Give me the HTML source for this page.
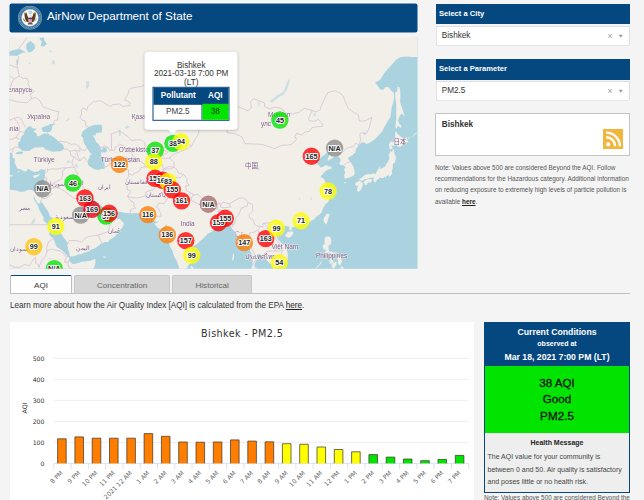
<!DOCTYPE html>
<html lang="en"><head><meta charset="utf-8"><title>AirNow Department of State</title>
<style>
*{box-sizing:border-box}
html,body{margin:0;padding:0}
body{width:644px;height:500px;overflow:hidden;background:#f4f4f4;font-family:"Liberation Sans",sans-serif;color:#333;position:relative}
.abs{position:absolute}
.hdr{left:10px;top:4px;width:408.3px;height:28.9px;transform:translate(-.5px,-.6px);border-radius:2px;box-shadow:0 0 0 .6px #fbfbfb;background:#05477f;color:#fff}
.hdr .t{position:absolute;left:37.4px;top:4.7px;font-size:11.69px;white-space:nowrap;line-height:15px}
.seal{position:absolute;left:8px;top:2px;transform:translate(.5px,.4px)}
.map{left:10px;top:38px;width:408.2px;height:231.4px;transform:translate(-.5px,-.2px);overflow:hidden;background:#f2efe9}
.mapsvg{position:absolute;left:0;top:0}
.ml{font:bold 7.2px "Liberation Sans",sans-serif;fill:#222;text-anchor:middle;stroke:#fff;stroke-width:2px;paint-order:stroke;stroke-linejoin:round}
.cl{font:6.5px "Liberation Sans","Noto Sans CJK SC",sans-serif;fill:#6d4a7e;stroke:#f6f3ee;stroke-width:.9px;paint-order:stroke;opacity:.88}
.pop{left:135.2px;top:13.6px;width:93px;height:78px;background:#fff;border-radius:3.5px;box-shadow:0 1px 3px rgba(0,0,0,.18);text-align:center;font-size:8.18px;line-height:8.8px;color:#333}
.pop:after{content:"";position:absolute;left:22.7px;top:77.5px;border:5.5px solid transparent;border-top:6.5px solid #fff;border-bottom:0}
.pop .tx{position:absolute;left:0;right:0;top:10.1px}
.ptab{position:absolute;left:8.3px;top:35.4px;width:76.2px;height:33.8px;border:0.8px solid #05477f;background:#fff}
.ptab div{position:absolute;text-align:center;font-size:8.18px}
.sel-h{left:435.6px;width:194.4px;height:20.2px;background:#05477f;color:#fff;font-size:7.6px;font-weight:bold;line-height:20px;padding-left:3.4px}
.sel-d{left:435.6px;width:194.4px;height:20.2px;background:#fff;box-shadow:inset 0 0 0 .65px #c2c2c2;border-radius:2px;font-size:8.18px;line-height:20.2px;padding-left:6.4px;color:#333;transform:translate(-.2px,-.2px)}
.sel-d .x{position:absolute;right:17.3px;top:.4px;font-size:8.5px;color:#999}
.sel-d .a{position:absolute;right:7px;top:9.1px;border:2.7px solid transparent;border-top:3px solid #999;border-bottom:0}
.cbox{left:435px;top:113.3px;width:195px;height:43px;background:#fff;border:1px solid #c4c4c4}
.cbox b{position:absolute;left:5.8px;top:6px;font-size:8.18px;line-height:9px;color:#333}
.rss{position:absolute;left:167.1px;top:14.5px}
.note{left:435px;top:161.8px;width:205px;font-size:6.4px;line-height:11.3px;color:#555;white-space:nowrap}
.note b{color:#222;text-decoration:underline}
.tab{top:275.4px;height:17.8px;font-size:8.1px;line-height:20.4px;text-align:center;border-radius:2px 2px 0 0}
.tab.on{left:9.9px;width:62.2px;background:#fff;border:1px solid #bdbdbd;border-top:1.6px solid #05477f;border-bottom:0;color:#333}
.tab.off{background:#d6d6d6;color:#666;border:1px solid #c8c8c8;border-bottom:0}
.tline{left:10px;top:293px;width:620px;height:1px;background:#bfbfbf}
.learn{left:10px;top:301px;font-size:8.13px;line-height:10px;white-space:nowrap;color:#333}
.learn u{color:#222}
.cpanel{left:10px;top:322px;width:464px;height:178px;background:#fff}
.chart{position:absolute;left:0;top:0}
.yl{font:6.2px "DejaVu Sans",sans-serif;fill:#333;text-anchor:end}
.xl{font:6.2px "DejaVu Sans",sans-serif;fill:#666;text-anchor:end}
.ct{font:9.6px "DejaVu Sans",sans-serif;fill:#333;text-anchor:middle;letter-spacing:.42px}
.ya{font:6.3px "DejaVu Sans",sans-serif;fill:#333;text-anchor:middle}
.cc{left:484px;top:322px;width:146px;height:171px;border:1px solid #05477f;background:#eee}
.cc .h{position:absolute;left:0;right:0;top:0;height:43.2px;background:#05477f;color:#fff;text-align:center;font-weight:bold}
.cc .g{position:absolute;left:0;right:0;top:43.2px;height:66.8px;background:#00e400;text-align:center;color:#111;font-size:11.69px;-webkit-text-stroke:.3px #111}
.cc .m{position:absolute;left:0;right:0;top:110px;bottom:0;background:#eee;font-size:7.01px;color:#444}
.note2{left:484px;top:494.2px;font-size:6.4px;line-height:8px;color:#555;white-space:nowrap}
</style></head><body>
<div class="abs hdr"><svg class="seal" width="24" height="24" viewBox="0 0 24 24"><circle cx="12" cy="12" r="11.750" fill="#2f6fbe" stroke="#cfc84e" stroke-width=".550"/><circle cx="12" cy="12" r="10.150" fill="none" stroke="#6d9fdc" stroke-width="1.300" stroke-dasharray="1 .700"/><circle cx="12" cy="12" r="8.450" fill="#fdfdfb" stroke="#d9d25c" stroke-width=".600" stroke-dasharray=".800 .400"/><circle cx="12.250" cy="6.400" r="2" fill="#b3d5ea"/><path d="M6.300 6.900L8.600 6.900C9 9 9.800 10.900 10.500 12.100L10.700 16.300 8.900 16.300C8 15 7.100 13.400 6.800 11.600Z" fill="#5e3d1e"/><path d="M17.900 6.900L15.600 6.900C15.200 9 14.400 10.900 13.700 12.100L13.500 16.300 15.300 16.300C16.200 15 17.100 13.400 17.400 11.600Z" fill="#5e3d1e"/><path d="M6.200 6.600l2.400.1-.2.900-2-.2Z" fill="#e2d24a"/><path d="M18 6.600l-2.400.1.200.900 2-.2Z" fill="#e2d24a"/><path d="M10.400 16.500h3.700l.600 2.300h-4.900Z" fill="#5a5650"/><ellipse cx="12.300" cy="10.400" rx="1.150" ry="1.400" fill="#f3f1ea" stroke="#bdb7a2" stroke-width=".300"/><path d="M12.700 10.900l.9.300-.9.300Z" fill="#e2c93e"/><path d="M10.400 12h3.700v2.800c0 .9-.9 1.500-1.850 1.800-.950-.3-1.850-.9-1.850-1.800Z" fill="#ee7783"/><path d="M10.400 12h3.700v1.500h-3.700Z" fill="#25478a"/><path d="M11.500 13.500v2.800M12.900 13.500v2.800" stroke="#fbe6e8" stroke-width=".450"/><path d="M5.100 12.800c.2 1.400.9 2.600 2 3.400l.7-.7c-.9-.7-1.500-1.700-1.700-2.900Z" fill="#3c8c3c"/><path d="M19.100 12.600l-2 3.200M18.500 12.300l-2 3.200" stroke="#8d8d8d" stroke-width=".400"/><path d="M9.400 16.500l1.200.2M14.900 16.500l-1.200.2" stroke="#dcc840" stroke-width=".800"/></svg><div class="t">AirNow Department of State</div></div>
<div class="abs map"><svg class="mapsvg" width="408.1" height="231.2" viewBox="0 0 408.1 231.2">
<rect width="409" height="232" fill="#aad3df"/>
<g filter="url(#soft)">
<path fill="#f2efe9" d="M429.6 -28.5L429.6 17.3L419.7 21.1L415.7 17.9L409.8 17.3L407.8 19.2L403.1 19.2L398.2 18.6L391.6 19.2L387.3 21.1L382.0 27.3L377.3 32.2L374.0 36.4L371.0 41.6L365.4 45.0L367.7 47.3L370.0 50.6L372.0 52.3L374.3 51.7L375.3 49.5L379.3 49.5L381.3 52.8L384.3 55.0L384.6 60.4L383.9 64.1L382.3 69.3L381.6 74.3L381.0 79.3L377.7 84.2L375.0 88.9L372.7 93.6L368.4 98.2L365.1 101.8L360.1 105.0L356.8 106.3L354.2 104.1L351.8 105.0L349.5 107.2L348.5 108.5L346.2 111.6L345.9 114.6L341.9 118.0L338.9 119.7L338.6 121.4L341.2 124.3L343.6 128.5L344.9 132.5L345.2 135.4L344.2 137.8L341.9 138.9L338.6 140.1L335.3 140.9L334.6 138.5L335.6 134.5L334.6 131.3L336.3 129.7L334.3 127.6L331.3 127.2L329.7 126.0L331.0 123.5L330.7 120.1L328.3 118.4L324.4 119.3L321.1 121.4L318.4 123.1L318.1 120.6L320.4 116.3L321.1 115.0L317.7 114.2L315.4 116.7L312.1 118.9L309.8 121.4L306.5 121.8L305.8 123.9L308.1 126.4L310.1 128.0L311.1 129.7L313.4 129.3L316.4 127.2L319.1 128.5L322.0 128.9L322.0 130.9L318.7 131.7L316.1 133.3L314.4 134.9L312.1 137.4L311.1 139.3L314.4 141.3L316.4 145.2L317.1 148.3L319.7 150.6L320.1 154.1L318.4 155.6L316.4 156.7L318.7 157.9L320.4 158.6L319.7 161.6L318.7 164.2L316.4 166.0L314.4 169.0L313.1 171.5L312.1 174.4L309.8 176.9L307.5 178.4L304.8 181.2L302.5 182.6L298.9 184.4L294.9 185.5L292.6 184.8L292.3 186.5L288.9 187.9L285.6 188.6L282.3 189.7L282.0 192.4L280.0 192.1L280.0 189.0L277.4 188.3L274.7 188.3L272.4 189.3L270.1 191.1L269.1 193.1L267.1 195.6L266.4 198.0L268.4 201.4L270.7 204.1L273.4 206.2L275.0 207.5L276.7 209.9L278.0 214.3L278.4 218.3L278.0 221.6L276.7 223.3L274.1 224.9L271.4 226.3L270.1 226.6L269.8 228.9L268.1 229.6L265.8 230.9L264.1 232.2L263.5 231.5L263.5 228.2L264.5 226.9L262.5 226.3L259.8 225.6L259.2 224.3L257.5 222.9L256.8 221.6L254.9 220.3L252.5 219.0L250.6 218.6L250.6 216.3L248.9 215.9L247.6 216.6L247.4 219.3L247.2 221.6L245.9 224.3L244.9 226.3L244.9 228.9L245.9 230.2L247.2 230.2L247.6 232.5L248.6 240.7L241.9 240.7L241.9 234.2L241.9 230.9L242.6 228.2L242.9 225.9L243.3 222.6L242.9 220.0L242.3 216.6L241.3 214.3L240.3 210.9L239.6 207.5L238.3 204.8L237.0 204.5L234.3 206.5L232.0 208.2L229.7 207.9L228.7 206.5L229.4 203.1L228.7 199.7L227.1 196.3L225.4 193.8L223.7 192.1L222.1 190.4L221.1 188.6L220.4 185.8L218.8 184.8L216.8 185.8L215.5 187.2L212.8 187.9L210.5 188.3L208.2 187.6L207.2 187.9L205.2 189.3L204.2 191.4L203.2 193.1L201.9 194.2L199.6 195.2L197.9 196.3L195.6 198.7L193.0 201.4L189.3 204.1L189.0 205.5L186.7 206.5L185.3 207.9L183.0 208.2L181.7 210.2L181.7 213.3L182.4 216.6L182.0 219.6L181.0 222.3L180.9 226.3L179.1 226.6L178.1 228.9L177.7 230.2L175.7 231.2L175.1 232.9L173.4 233.8L171.4 232.9L169.8 230.9L169.1 228.2L168.1 225.6L167.1 222.6L165.5 220.3L164.2 217.6L163.5 214.3L162.2 211.6L160.9 209.2L159.5 205.8L158.9 202.4L157.9 199.0L157.5 196.6L157.2 193.8L157.5 191.1L156.9 189.7L156.9 186.2L155.9 187.2L155.2 189.7L152.9 190.7L150.9 191.4L148.3 190.0L145.6 187.2L145.0 185.5L147.3 185.1L149.3 183.7L147.3 184.0L145.0 183.3L143.3 181.6L142.3 180.5L140.0 179.8L139.0 177.6L138.0 176.9L137.0 175.1L133.4 174.8L130.1 175.5L126.8 175.1L123.4 175.5L120.5 175.5L116.8 175.1L113.5 174.8L111.2 174.1L107.9 173.7L105.9 171.9L105.2 169.0L102.9 168.2L100.3 170.1L97.0 170.4L93.7 169.7L90.7 167.1L87.0 165.7L85.4 162.7L84.7 161.2L82.7 157.9L80.4 157.5L78.4 156.3L77.1 157.9L75.5 158.2L75.5 160.1L76.8 163.1L78.1 166.0L80.8 168.2L82.4 170.1L82.7 173.0L84.1 175.1L84.7 176.9L85.4 174.1L86.0 172.2L87.4 173.3L87.4 176.2L86.7 177.6L88.0 179.4L90.7 179.1L94.0 179.4L96.6 178.4L99.6 175.1L101.9 172.6L103.1 171.3L103.3 174.4L103.3 176.9L104.9 179.4L107.9 180.9L110.5 181.2L112.5 183.7L114.5 185.1L113.5 188.6L111.2 191.8L108.6 192.8L107.9 196.3L106.2 197.6L103.9 200.0L100.3 201.7L98.6 204.1L95.6 204.1L92.7 205.2L89.4 207.5L86.0 210.2L82.1 211.6L78.8 213.6L75.5 214.6L72.1 216.3L67.8 216.9L65.5 218.3L62.9 218.6L60.6 218.6L59.9 216.6L59.6 214.3L58.6 211.2L57.9 208.5L58.2 205.8L56.6 202.8L54.3 200.0L52.3 196.6L50.0 193.1L47.3 190.4L46.0 187.9L45.3 184.0L43.3 180.5L40.4 178.4L39.4 175.1L37.4 171.9L34.7 167.9L33.1 165.3L31.8 164.9L32.4 159.7L31.4 162.3L30.4 165.3L29.9 166.2L27.8 164.6L26.1 162.0L24.5 158.2L23.8 159.7L24.8 162.3L26.5 164.6L27.8 166.8L28.8 169.0L30.1 172.6L32.1 176.2L34.1 179.8L34.1 183.0L36.7 185.1L38.7 186.9L39.7 190.4L39.7 193.8L40.0 197.3L42.0 199.4L44.0 200.7L45.7 205.8L47.3 209.2L50.6 211.2L53.3 213.3L56.6 216.9L59.2 219.0L59.9 221.0L59.2 222.3L60.9 224.3L63.2 226.3L65.5 226.3L68.8 225.3L72.1 223.9L75.5 223.6L78.8 223.3L82.1 222.6L84.7 221.3L86.0 221.6L85.7 225.9L84.7 229.2L83.7 230.9L82.1 240.7L-17.2 240.7L-17.2 147.2L-10.6 146.8L-7.0 147.9L-4.0 150.3L-0.7 151.8L2.6 152.2L6.9 152.7L10.9 154.1L15.2 153.7L17.5 152.4L19.8 152.0L22.5 152.4L23.8 153.3L26.5 153.7L29.1 152.9L30.8 151.8L32.1 148.3L32.8 146.4L34.1 142.9L35.4 140.1L35.4 136.2L35.7 134.5L36.4 131.7L34.4 132.1L31.8 131.3L29.1 133.3L25.8 134.1L23.5 133.7L19.2 131.3L17.9 131.3L17.5 133.3L14.6 133.7L11.9 131.7L9.3 131.3L7.6 130.5L6.6 128.0L5.3 125.2L5.3 123.1L5.3 120.6L3.3 120.1L3.3 118.0L3.0 116.7L2.6 115.5L-0.7 114.2L-4.0 114.6L-17.2 115.9L-17.2 -28.5Z"/>
<path fill="#f2efe9" d="M379.3 106.7L381.0 103.6L384.3 104.1L385.6 100.5L385.6 95.0L386.3 93.6L388.2 95.9L391.6 99.1L394.9 100.7L397.5 99.1L397.2 102.3L399.2 103.4L396.5 105.0L394.2 105.2L390.9 109.4L388.2 108.1L385.9 106.7L383.3 108.1L381.6 107.2L383.0 110.3L383.9 110.3L380.3 112.0L380.0 109.4Z"/>
<path fill="#f2efe9" d="M383.3 111.6L384.6 112.0L384.9 115.9L386.6 119.7L385.3 125.2L383.3 125.6L383.3 130.5L382.3 133.3L382.8 135.8L381.3 137.8L379.6 138.9L379.3 136.2L378.6 137.8L377.0 138.1L376.0 140.1L375.0 138.5L374.0 140.1L371.0 140.1L369.7 139.3L369.7 141.3L367.7 141.7L366.1 144.6L363.8 142.9L364.1 141.3L364.7 139.9L362.8 139.7L360.1 140.1L357.5 141.3L354.8 141.3L353.8 142.9L351.2 142.5L349.9 142.7L349.9 141.1L352.2 139.9L355.1 137.4L357.5 136.4L360.8 136.4L364.1 135.6L366.4 136.2L367.1 133.7L369.1 130.9L369.4 128.9L371.0 128.5L370.0 130.1L370.4 131.3L372.7 130.5L375.3 128.9L376.7 126.4L378.6 123.9L379.6 121.0L380.0 118.4L379.0 118.2L380.0 115.9L381.0 113.3L382.6 114.2Z"/>
<path fill="#f2efe9" d="M353.5 145.0L355.8 142.5L356.8 142.3L359.1 141.3L361.1 141.1L362.4 141.7L362.4 143.3L360.8 145.2L358.8 144.5L356.8 147.4L355.1 146.8L354.8 144.8Z"/>
<path fill="#f2efe9" d="M349.9 142.9L352.5 144.1L353.2 145.6L353.2 147.6L351.8 151.0L350.5 152.9L349.2 154.1L347.5 152.9L347.9 150.3L348.9 147.9L347.5 147.9L346.2 147.9L345.6 145.6L346.9 144.5L348.2 144.1Z"/>
<path fill="#f2efe9" d="M386.6 91.3L385.9 88.0L386.6 84.2L386.9 79.3L386.6 75.3L386.9 69.3L386.6 64.1L385.6 59.9L385.9 54.5L387.6 53.4L388.2 49.0L389.9 49.5L390.9 54.5L390.9 58.8L390.6 64.1L392.6 70.3L394.2 75.8L395.5 78.3L391.6 75.8L389.2 80.3L388.6 82.7L390.2 86.6L391.6 87.5L391.6 90.3L389.2 88.5L388.2 88.5Z"/>
<path fill="#f2efe9" d="M317.1 176.0L320.1 176.2L319.1 179.8L318.1 183.3L316.8 186.9L314.8 184.8L314.1 182.3L314.4 180.1L316.1 177.6Z"/>
<path fill="#f2efe9" d="M276.4 196.6L278.0 194.2L280.7 193.7L283.7 193.8L284.0 195.2L282.3 198.0L280.7 199.4L279.0 200.0L276.4 199.0L276.0 197.3Z"/>
<path fill="#f2efe9" d="M315.8 199.0L317.1 198.7L320.4 199.0L321.4 200.7L322.0 203.8L321.1 206.5L319.1 207.9L319.1 210.9L319.7 213.6L322.0 213.6L323.7 214.6L326.7 214.9L327.3 217.6L327.0 219.0L324.7 217.6L322.7 216.6L321.7 215.6L319.4 214.6L317.1 215.1L315.8 214.9L315.8 212.9L317.1 212.6L315.8 211.6L314.1 211.6L313.4 208.9L313.4 206.5L314.8 207.2L315.1 204.8L315.1 202.4Z"/>
<path fill="#f2efe9" d="M315.1 216.3L317.1 215.9L318.7 217.3L318.7 219.6L317.4 220.3L316.4 218.6Z"/>
<path fill="#f2efe9" d="M320.4 221.3L323.4 222.3L324.0 223.9L322.4 225.6L320.4 225.9L320.1 223.6Z"/>
<path fill="#f2efe9" d="M328.0 219.1L331.3 219.3L332.6 223.6L331.0 226.9L330.3 227.6L329.3 226.9L328.3 224.6L328.7 222.6L328.0 221.0Z"/>
<path fill="#f2efe9" d="M323.7 224.6L325.4 224.6L327.0 223.6L327.0 226.6L325.0 229.6L324.0 230.6L322.0 228.9L322.4 226.6Z"/>
<path fill="#f2efe9" d="M312.1 223.3L311.5 225.9L308.8 228.6L305.5 231.9L304.5 232.9L306.5 229.9L309.8 226.6L311.5 223.6Z"/>
<path fill="#f2efe9" d="M331.6 228.2L334.3 230.2L334.6 234.2L333.6 240.7L320.4 240.7L320.7 237.5L322.0 234.8L324.7 232.2L326.4 233.8L328.0 232.5L329.7 231.2L331.0 230.9Z"/>
<path fill="#f2efe9" d="M23.5 138.5L25.5 137.2L27.8 137.2L30.9 135.8L29.1 138.3L28.1 138.7L25.8 140.1L23.8 139.5Z"/>
<path fill="#f2efe9" d="M-5.6 136.6L-3.3 136.4L-0.7 137.0L2.0 137.4L3.6 137.6L3.3 138.5L-0.7 138.7L-4.0 137.9L-5.6 137.6Z"/>
<path fill="#f2efe9" d="M8.3 133.9L9.9 132.7L9.6 134.5L8.4 134.9Z"/>
<path fill="#f2efe9" d="M181.0 228.2L182.4 228.2L184.4 230.9L185.7 232.5L187.7 235.8L187.0 239.4L181.4 240.7L180.7 235.8L181.0 232.5L181.7 229.9Z"/>
<path fill="#f2efe9" d="M93.0 219.0L94.7 218.8L97.0 219.1L95.6 220.0L93.7 219.8Z"/>
<path fill="#f2efe9" d="M334.3 145.2L335.6 144.3L336.8 144.6L335.6 145.6Z"/>
<path fill="#f2efe9" d="M223.4 215.9L224.4 216.3L224.4 221.0L223.4 222.6L222.7 222.3L223.1 219.3Z"/>
<path fill="#f2efe9" d="M402.8 98.7L406.1 95.5L409.1 93.6L408.4 94.5L405.1 97.3L403.1 98.9Z"/>
<path fill="#f2efe9" d="M397.8 101.8L399.8 99.1L400.8 98.7L399.5 100.7L398.2 101.8Z"/>
<path fill="#aad3df" d="M12.6 112.9L9.3 109.8L8.3 107.2L9.3 104.1L11.2 102.7L11.6 99.1L14.6 95.9L14.9 93.6L16.5 91.3L18.5 88.9L20.8 88.5L22.5 88.9L21.8 90.3L24.1 90.8L27.5 90.8L25.1 92.7L24.1 94.3L27.1 95.2L27.1 97.8L28.5 98.7L30.4 98.0L32.8 96.8L34.1 95.7L37.4 95.9L38.1 95.0L38.7 95.5L40.0 97.3L42.4 98.2L45.7 100.5L48.0 102.7L50.0 104.5L52.3 105.9L53.9 107.6L54.6 110.7L53.3 112.4L50.0 113.7L47.3 113.5L44.0 114.0L40.7 113.3L38.4 112.2L36.7 112.4L35.4 110.7L33.1 109.2L29.1 109.6L25.8 109.8L22.5 111.1L20.2 112.9L16.9 113.1L13.6 112.9Z"/>
<path fill="#aad3df" d="M38.1 94.5L35.1 94.1L33.4 94.1L32.1 90.8L33.4 89.4L36.7 88.0L38.4 87.7L40.7 86.3L43.3 86.1L46.3 85.6L45.0 87.0L43.0 88.0L42.4 90.3L42.7 91.3L41.7 92.7L40.7 94.1L38.7 94.3Z"/>
<path fill="#aad3df" d="M5.9 115.9L7.6 116.5L11.9 116.3L14.2 115.0L12.6 113.7L9.3 113.7L7.3 114.4Z"/>
<path fill="#aad3df" d="M72.1 96.8L73.1 93.6L75.5 91.7L78.8 89.4L82.1 88.0L85.4 87.0L88.7 87.0L92.0 87.0L92.7 90.3L92.3 94.5L88.7 95.0L86.0 95.5L86.4 97.8L83.1 97.8L84.7 99.6L86.0 102.1L86.4 104.1L88.7 105.9L90.3 107.6L91.0 110.3L91.7 112.4L93.7 109.4L97.0 109.8L97.6 112.9L95.3 115.0L93.0 114.6L91.7 114.0L91.3 117.2L92.0 118.0L92.7 120.1L93.7 121.0L95.0 122.2L95.0 126.4L95.3 129.3L95.0 130.9L92.0 131.3L88.7 132.1L85.4 131.7L82.7 130.1L80.4 128.7L78.4 126.8L78.4 124.3L78.8 121.4L80.1 120.1L80.4 117.2L83.1 116.5L80.8 115.5L79.4 113.3L77.8 110.7L76.4 108.5L74.5 105.4L73.8 102.3L73.5 99.6L71.5 98.2Z"/>
<path fill="#aad3df" d="M-17.2 19.8L-5.6 19.5L-1.0 18.2L2.6 17.6L7.6 18.2L9.9 16.6L12.6 15.0L16.5 15.0L14.2 13.4L11.2 11.4L7.6 11.4L4.3 12.1L-1.0 14.0L-9.0 15.3L-17.2 14.7Z"/>
<path fill="#aad3df" d="M16.5 10.7L19.2 15.0L22.5 13.7L25.5 10.7L25.1 6.7L20.8 3.3L16.9 6.1Z"/>
<path fill="#aad3df" d="M31.1 8.1L34.4 8.7L37.1 6.1L34.4 1.9L35.1 -1.5L31.8 -4.4L30.1 1.3L32.4 4.0Z"/>
<path fill="#aad3df" opacity="0.55" d="M159.9 95.0L162.2 95.9L163.5 91.3L166.5 88.5L169.8 88.5L173.1 88.9L176.4 88.9L178.7 88.0L178.1 87.0L174.8 87.7L171.4 87.5L168.1 87.3L164.8 87.5L162.2 89.9L160.2 92.2Z"/>
<path fill="#aad3df" opacity="0.55" d="M168.8 107.4L171.4 106.3L174.8 106.1L175.9 107.0L174.1 108.5L171.4 108.7L169.5 108.3Z"/>
<path fill="#aad3df" opacity="0.55" d="M259.8 63.6L262.8 64.6L266.1 62.0L269.4 59.3L273.1 57.7L276.0 54.5L278.7 49.0L280.3 42.8L279.7 40.4L277.4 45.0L275.4 50.6L273.1 54.5L270.1 56.1L266.8 58.3L263.5 60.9L260.8 62.5Z"/>
<path fill="#aad3df" opacity="0.55" d="M56.6 124.3L58.6 122.7L60.9 123.1L59.9 124.9L57.9 125.2Z"/>
<path fill="#aad3df" opacity="0.55" d="M65.5 126.4L66.8 125.6L68.5 128.5L67.5 130.1L66.2 129.3Z"/>
<path fill="#aad3df" opacity="0.55" d="M109.2 91.7L110.5 91.7L111.5 95.0L111.2 97.8L109.5 98.2L109.5 95.0Z"/>
<path fill="#aad3df" opacity="0.55" d="M115.2 89.4L118.2 87.5L120.5 88.9L118.2 90.8L115.8 90.8Z"/>
<path fill="#aad3df" opacity="0.55" d="M42.4 26.1L43.3 21.7L45.3 23.6L44.7 26.7Z"/>
<path fill="#aad3df" opacity="0.55" d="M6.3 21.7L8.9 21.7L8.6 26.1L7.3 27.9L6.9 24.9Z"/>
<path fill="#aad3df" opacity="0.55" d="M246.6 130.9L248.2 129.7L250.2 130.9L249.2 132.1L247.2 131.7Z"/>
<path fill="#aad3df" opacity="0.55" d="M353.8 95.0L355.5 94.5L356.1 96.8L354.5 97.8Z"/>
<path fill="#aad3df" opacity="0.55" d="M248.6 63.6L249.9 63.6L249.9 69.3L248.9 69.3Z"/>
<path fill="#aad3df" opacity="0.55" d="M222.1 69.8L224.7 69.3L225.4 70.8L223.1 71.3Z"/>
<path fill="#aad3df" opacity="0.55" d="M192.3 81.2L195.6 81.2L197.9 82.7L194.6 83.2Z"/>
<path fill="#aad3df" opacity="0.55" d="M185.3 89.9L187.7 89.9L188.0 91.7L186.0 91.7Z"/>
<path fill="#aad3df" opacity="0.55" d="M77.1 43.3L79.8 43.9L79.4 48.4L77.4 51.7L76.4 49.0Z"/>
<path fill="#aad3df" opacity="0.55" d="M56.3 83.2L59.6 79.8L60.2 80.8L57.6 83.7Z"/>
<path fill="#aad3df" opacity="0.55" d="M23.2 181.6L25.5 180.1L25.5 183.3L24.1 185.8L21.2 186.9L22.5 184.4Z"/>
<path fill="#aad3df" opacity="0.55" d="M39.0 220.3L41.0 220.3L40.7 221.9L39.4 221.9Z"/>
<path fill="#aad3df" opacity="0.55" d="M313.4 152.6L315.1 152.6L315.4 154.1L313.8 154.1Z"/>
<path fill="#aad3df" opacity="0.55" d="M300.5 159.7L302.5 160.5L302.2 162.3L300.9 161.6Z"/>
<path fill="#aad3df" opacity="0.55" d="M289.3 160.5L290.9 160.1L290.6 161.6L289.3 162.0Z"/>
<path fill="#aad3df" opacity="0.55" d="M303.8 75.8L306.2 75.8L306.5 77.8L304.5 78.3Z"/>
<path fill="#aad3df" opacity="0.55" d="M65.5 115.5L67.5 116.7L66.8 117.6L65.9 116.7Z"/>
<path fill="#aad3df" opacity="0.55" d="M40.0 12.7L42.0 12.7L42.0 14.4L40.4 14.7Z"/>
<path fill="#aad3df" opacity="0.55" d="M19.2 24.9L21.2 24.9L20.8 26.7L19.5 26.4Z"/>
</g>
<g fill="none" stroke="#c6aeca" stroke-width="0.55" stroke-linejoin="round"><path d="M8.6 11.4L12.6 6.7L15.9 1.9L19.8 -4.4"/><path d="M9.3 18.6L7.3 27.3L8.3 31.0L8.9 34.6L9.9 38.4"/><path d="M-4.0 50.6L1.0 49.5L2.0 45.6L4.6 41.0L9.9 38.4L13.9 40.7L17.5 40.4L18.9 43.9L18.5 46.2L20.5 49.5L24.8 53.9L21.8 55.6L20.5 55.0L21.8 60.9L17.5 65.1L13.2 64.6L7.6 64.1L1.0 62.0L-4.0 63.6"/><path d="M-4.0 37.5L1.0 38.7L4.6 41.0"/><path d="M-3.0 28.6L1.0 27.3L7.3 29.8"/><path d="M21.8 60.9L26.5 59.6L30.4 63.0L34.1 69.8L37.4 70.3L42.4 72.3L48.3 73.8L49.5 73.8L48.3 77.8L48.3 82.2L45.3 82.5L43.2 86.1"/><path d="M14.6 94.5L9.9 93.8L9.6 87.5L7.3 83.7L4.6 80.5L-0.7 82.9L-7.6 81.7"/><path d="M16.2 89.4L14.6 87.0L13.2 84.2L11.6 81.2L8.6 79.5L4.6 80.5"/><path d="M9.9 93.8L6.6 100.0L1.0 101.8L-4.0 101.4"/><path d="M10.9 101.8L6.6 100.0"/><path d="M2.8 115.0L3.8 110.7L5.9 109.4L9.3 109.4"/><path d="M3.8 110.7L-0.7 112.4L-4.0 111.6"/><path d="M54.1 111.6L57.6 111.1L60.4 113.3L60.9 114.2L61.2 117.6L64.9 119.3L63.5 120.6L62.4 124.7L63.2 126.8L64.9 129.7L62.5 129.3L56.9 130.1L52.3 130.1L49.0 131.3L42.4 131.1L39.0 131.9L37.7 131.3L38.1 133.7L36.2 135.2"/><path d="M49.0 103.2L53.9 103.9L57.2 104.1L61.6 106.7L65.2 106.1L67.8 107.2L70.2 109.8L73.1 112.4L75.1 112.9L77.4 110.0"/><path d="M60.4 113.3L65.5 112.4L70.5 113.5L70.2 109.8"/><path d="M65.5 112.4L67.5 114.6L68.8 119.7L70.5 122.7"/><path d="M64.9 119.3L69.2 122.7L70.5 122.7L74.8 119.3L75.5 120.6L76.8 122.2L78.4 124.5"/><path d="M64.9 129.7L66.8 134.5L68.8 135.4L66.8 140.5L67.5 142.5L69.5 145.6L73.5 148.7L75.1 151.0L74.5 154.1L75.5 156.0L77.3 158.0"/><path d="M56.9 130.1L52.9 132.9L53.3 136.2L52.3 140.9L45.0 144.8L46.3 149.5L50.3 150.6L55.6 153.7L64.5 160.8L70.7 161.2L74.5 157.5L75.5 157.9"/><path d="M70.7 161.2L73.6 161.8L74.5 163.3L76.8 163.3"/><path d="M35.4 147.6L38.4 149.1L45.0 144.8"/><path d="M46.3 149.5L39.0 152.2L42.4 156.0L40.7 157.9L35.7 160.8L32.4 160.3"/><path d="M32.1 159.7L29.9 153.3"/><path d="M32.8 146.0L34.4 145.2L35.4 147.6L34.2 148.7L34.1 152.2L32.4 159.7"/><path d="M35.4 139.9L37.4 140.5L36.7 142.9L35.1 145.0"/><path d="M-0.7 151.8L-1.0 157.9L-0.7 186.9L20.2 186.9L26.5 186.9L38.7 186.9"/><path d="M-0.7 186.9L-0.7 193.8L-4.0 193.8"/><path d="M44.3 200.7L39.0 204.1L37.1 210.2L37.4 213.3L42.0 211.2L45.7 212.3L49.6 212.9L54.9 216.6L56.9 219.3L59.2 218.6"/><path d="M56.9 219.3L54.9 224.3L58.6 224.4L59.7 222.6"/><path d="M37.4 213.3L36.1 218.6L32.8 221.6L29.4 229.2L29.4 232.2"/><path d="M29.4 229.2L28.8 226.9L26.1 225.3L26.5 220.3L24.8 220.3L23.8 221.9L19.8 228.2L15.9 226.6L9.3 229.6L4.3 229.2L-0.7 226.6"/><path d="M58.6 224.4L58.9 228.9L62.2 230.9"/><path d="M58.2 206.2L59.6 202.8L62.2 202.8L66.2 202.8L70.2 203.5L72.1 204.3L76.1 200.0L79.1 198.7L88.7 197.3L92.3 205.3"/><path d="M88.7 197.3L98.6 193.8L100.9 186.9L99.3 184.4L90.7 183.7L87.4 179.1"/><path d="M99.3 184.4L101.3 179.1L102.3 177.3L103.3 176.6"/><path d="M95.0 129.1L98.0 128.7L99.9 126.0L105.9 125.2L109.9 128.0L112.9 128.5L116.5 132.1L119.0 131.9L119.1 136.0L118.8 139.3L116.8 142.1L117.0 143.9L118.2 144.5L117.2 146.0L118.0 152.2L120.8 152.6L121.1 154.6L118.0 158.4L121.1 163.1L124.4 164.6L124.4 168.2L126.1 170.4L122.8 171.3L121.3 171.7L120.5 175.5"/><path d="M90.3 110.5L95.0 108.1L98.3 109.4L100.1 112.7L101.9 112.4L105.2 112.4L105.6 109.8L110.2 106.3L115.2 108.5L115.5 112.0L121.5 113.3L123.4 118.0L129.1 122.4L133.7 125.2L136.9 129.1L133.7 129.3L131.1 130.1L130.1 133.3L125.8 135.2L122.8 137.4L119.1 136.0"/><path d="M101.9 112.4L101.9 95.9L110.5 93.1L118.5 98.7L121.8 102.7L131.4 101.8L135.4 105.0L135.0 107.6L136.7 109.4L137.4 112.9L141.3 112.9L142.0 114.6L143.6 115.5L145.0 112.0L148.9 109.4L151.4 108.3"/><path d="M79.4 89.4L76.8 88.5L75.5 83.2L72.5 82.2L70.5 79.5L72.1 75.8L71.8 72.3L73.5 70.3L77.4 72.3L78.1 68.8L84.4 63.6L86.7 64.1L89.7 62.8L93.3 64.1L97.3 66.7L100.9 68.8L103.6 66.7L110.2 66.2L113.5 68.8L120.1 67.7L120.5 65.1L115.2 61.5L118.5 56.1L119.1 52.8L121.8 50.6L125.8 49.5L132.4 48.7L135.0 46.7L142.3 45.0L145.0 42.8L150.9 43.3L152.2 49.5L157.9 50.1L159.9 51.2L163.2 52.8L169.8 49.5L171.1 48.4L174.4 54.5L181.4 67.7L186.3 68.0L192.6 66.7L198.6 73.8L203.9 72.8L205.7 76.3L200.6 79.8L200.2 85.6L191.3 85.6L189.0 93.6L189.6 95.0L184.0 104.3L182.0 108.5"/><path d="M151.4 108.3L154.2 105.9L159.9 107.4L160.2 104.8L162.5 104.1L167.1 105.9L178.1 105.9L182.0 108.5L176.4 111.6L171.1 113.7L164.8 116.1L160.9 118.9L160.4 120.3L164.5 124.7L164.5 129.5"/><path d="M151.4 108.3L153.6 112.0L158.5 114.6L153.9 117.6L149.9 118.4L146.0 119.7L150.3 119.9L154.2 120.6L160.4 120.3"/><path d="M164.5 129.5L159.2 128.7L153.6 131.7L153.2 126.8L148.9 128.0L146.3 129.9L141.7 130.5L141.0 129.7L136.9 129.1"/><path d="M141.0 129.7L142.0 124.7L139.7 120.1L143.6 115.5"/><path d="M118.0 158.4L123.4 160.1L128.7 160.1L136.0 158.2L136.2 154.5L140.7 152.6L144.3 151.8L146.0 150.3L146.6 146.4L148.3 145.6L148.3 142.5L151.9 142.1L153.7 137.0L152.2 134.1L156.5 131.3L161.8 131.1L164.5 129.5L167.5 131.7L168.8 135.2L174.1 136.6"/><path d="M142.3 180.9L144.1 178.7L151.9 178.4L150.3 173.7L148.6 170.4L146.6 169.0L149.6 165.3L154.6 165.7L159.5 158.2L163.2 154.5L163.2 151.4L166.1 149.1L162.8 147.2L161.5 145.6L160.9 141.3L164.8 140.1L171.1 139.7L174.1 136.6L177.7 140.9L177.1 144.5L179.7 147.4L177.2 147.9L176.1 148.3L177.2 152.9L179.4 154.1L184.7 157.1"/><path d="M184.7 157.1L188.3 156.5L193.0 160.8L195.3 162.0L198.3 163.1L201.2 165.7L204.2 165.5L208.2 165.9L208.0 171.2L204.5 170.8L200.6 170.4L196.6 167.9L192.3 167.7L187.7 165.7L181.7 162.3L182.4 159.0L184.7 157.1"/><path d="M208.4 165.7L210.5 165.3L210.8 167.9L213.2 164.6L215.8 164.9L219.8 166.0L221.4 169.3L214.5 169.9L211.2 169.3L210.8 167.9"/><path d="M219.9 166.0L224.4 163.1L229.7 160.5L234.3 160.1L238.6 164.4"/><path d="M211.5 187.6L210.5 182.6L208.5 177.6L209.2 171.9L213.8 173.0L214.1 175.5L221.8 175.9L218.4 179.8L219.1 183.0L222.1 181.2L223.1 187.2L222.1 190.7"/><path d="M223.1 187.2L225.1 186.2L225.7 180.9L229.7 176.2L231.7 170.4L237.6 168.2L238.6 164.4L242.9 166.8L243.3 173.0L239.6 176.9L240.0 179.8L243.9 182.6L244.9 186.5L247.9 188.6L251.4 188.4L247.9 192.6L243.9 194.7L240.3 195.2L238.8 198.8L240.3 201.7L242.9 206.2L241.6 210.2L244.8 215.3L244.9 219.0L246.4 221.6L243.4 226.3L242.8 227.6"/><path d="M247.9 192.6L249.4 193.3L249.2 195.6L251.5 195.6L250.9 202.4L254.5 200.0L256.5 201.2L258.8 199.4L260.8 199.7L263.1 202.4L263.5 206.2L266.1 208.9L265.8 212.6L264.8 213.3L257.5 213.6L255.8 215.6L255.4 216.6L257.2 222.1"/><path d="M251.4 188.4L253.4 189.8L253.5 185.5L254.7 185.5L257.5 185.1L260.6 185.1L263.5 183.7L265.3 182.1L269.1 183.7L269.8 186.9L272.1 188.3L274.2 188.4"/><path d="M254.7 185.5L257.2 188.3L258.2 190.9L262.8 191.8L262.1 194.9L260.8 195.9L264.8 198.3L266.8 202.1L269.8 206.0L272.1 207.5L272.7 210.6L272.7 211.9L272.1 215.9L272.7 220.0L268.8 221.9L266.8 222.3L268.1 224.9L264.5 224.6L262.3 226.3"/><path d="M264.8 213.3L267.4 213.1L270.1 213.3L272.7 211.9"/><path d="M205.7 76.3L207.2 76.1L213.5 72.3L221.1 68.2L228.7 69.0L238.6 73.1L241.9 69.3L241.0 64.1L244.3 60.9L254.9 65.1L255.2 68.8L259.8 71.0L265.4 69.5L269.8 70.0L273.7 72.1L276.0 75.1L283.0 76.1L289.9 74.3L294.9 70.5L302.9 72.6L298.9 81.0L300.2 83.2L305.2 83.4L308.8 81.7L312.8 85.6L313.4 87.5L312.8 88.5L305.2 89.4L302.5 89.9L299.5 93.8L295.6 94.1L292.6 97.1L287.0 95.7L285.3 98.9L287.1 101.8L282.0 106.5L278.4 107.4L272.4 107.4L264.1 111.1L262.5 109.8L254.2 107.2L250.6 106.5L238.3 105.9L235.7 106.1L232.3 99.1L226.4 96.2L217.5 95.0L217.8 88.5L214.8 82.2L209.8 80.8L207.2 76.1"/><path d="M302.9 72.6L306.5 74.3L310.8 71.8L311.5 68.8L314.1 63.0L316.1 58.8L318.7 54.5L325.7 53.1L330.3 55.0L333.6 58.3L338.6 70.5L343.2 73.8L348.9 77.3L349.9 83.2L355.1 83.2L362.4 79.8L361.1 84.6L359.8 89.9L357.1 95.5L354.8 95.9L353.0 94.5L350.2 96.4L351.2 102.7L348.9 107.4L346.5 105.2L343.6 109.0L340.6 109.4L336.6 110.7L333.6 114.0L328.3 118.0"/><path d="M334.3 127.4L336.9 125.2L341.4 123.9"/></g>
<text class="cl" x="22.5" y="54.1" text-anchor="end">Беларусь</text>
<text class="cl" x="29.2" y="81.7" text-anchor="middle">Україна</text>
<text class="cl" x="9.0" y="93.2" text-anchor="end">România</text>
<text class="cl" x="34.6" y="124.1" text-anchor="middle">Türkiye</text>
<text class="cl" x="122.2" y="81.7" text-anchor="start">Қазақстан</text>
<text class="cl" x="109.2" y="114.3" text-anchor="start">O'zbekiston</text>
<text class="cl" x="110.8" y="124.7" text-anchor="middle">Türkmenistan</text>
<text class="cl" x="95.1" y="151.3" text-anchor="middle">ایران</text>
<text class="cl" x="66.5" y="146.9" text-anchor="middle">العراق</text>
<text class="cl" x="48.3" y="148.0" text-anchor="middle">سوريا</text>
<text class="cl" x="128.5" y="145.8" text-anchor="middle">افغانستان</text>
<text class="cl" x="146.6" y="159.6" text-anchor="middle">پاکستان</text>
<text class="cl" x="178.2" y="188.1" text-anchor="middle">India</text>
<text class="cl" x="15.0" y="172.1" text-anchor="middle">مصر</text>
<text class="cl" x="56.9" y="181.5" text-anchor="middle">السعودية</text>
<text class="cl" x="73.6" y="212.5" text-anchor="middle">اليمن</text>
<text class="cl" x="105.5" y="195.0" text-anchor="middle">عُمان</text>
<text class="cl" x="10.7" y="213.0" text-anchor="middle">السودان</text>
<text class="cl" x="242.1" y="130.1" text-anchor="middle">中国</text>
<text class="cl" x="269.5" y="79.3" text-anchor="middle">Монгол</text>
<text class="cl" x="256.5" y="88.6" text-anchor="middle">улс</text>
<text class="cl" x="390.5" y="105.8" text-anchor="middle">日本</text>
<text class="cl" x="275.4" y="211.4" text-anchor="middle">Việt Nam</text>
<text class="cl" x="250.6" y="220.8" text-anchor="middle">ประเทศไทย</text>
<text class="cl" x="322.1" y="220.3" text-anchor="middle">Philippines</text>
<text class="cl" x="232.7" y="200.3" text-anchor="middle">မြန်မာ</text>
<circle cx="44.8" cy="230.9" r="8.7" fill="#00e400" fill-opacity="0.78" filter="url(#mb)"/>
<circle cx="24.3" cy="208.9" r="8.7" fill="#ffc40a" fill-opacity="0.78" filter="url(#mb)"/>
<circle cx="46.3" cy="188.6" r="8.7" fill="#ffff00" fill-opacity="0.78" filter="url(#mb)"/>
<circle cx="33.1" cy="151.0" r="8.7" fill="#8a8a8a" fill-opacity="0.78" filter="url(#mb)"/>
<circle cx="63.5" cy="145.2" r="8.7" fill="#00e400" fill-opacity="0.78" filter="url(#mb)"/>
<circle cx="75.4" cy="160.2" r="8.7" fill="#ff0000" fill-opacity="0.78" filter="url(#mb)"/>
<circle cx="71.2" cy="177.3" r="8.7" fill="#8a8a8a" fill-opacity="0.78" filter="url(#mb)"/>
<circle cx="96.6" cy="178.2" r="8.7" fill="#00e400" fill-opacity="0.78" filter="url(#mb)"/>
<circle cx="82.4" cy="171.5" r="8.7" fill="#e60012" fill-opacity="0.78" filter="url(#mb)"/>
<circle cx="99.6" cy="175.5" r="8.7" fill="#ff0000" fill-opacity="0.78" filter="url(#mb)"/>
<circle cx="109.9" cy="126.6" r="8.7" fill="#ff7e00" fill-opacity="0.78" filter="url(#mb)"/>
<circle cx="145.8" cy="112.4" r="8.7" fill="#00e400" fill-opacity="0.78" filter="url(#mb)"/>
<circle cx="144.3" cy="124.1" r="8.7" fill="#ffff00" fill-opacity="0.78" filter="url(#mb)"/>
<circle cx="145.6" cy="140.5" r="8.7" fill="#ff0000" fill-opacity="0.78" filter="url(#mb)"/>
<circle cx="153.2" cy="142.5" r="8.7" fill="#ff0000" fill-opacity="0.78" filter="url(#mb)"/>
<circle cx="158.4" cy="143.7" r="8.7" fill="#ffff00" fill-opacity="0.78" filter="url(#mb)"/>
<circle cx="162.7" cy="152.0" r="8.7" fill="#ff0000" fill-opacity="0.78" filter="url(#mb)"/>
<circle cx="172.1" cy="163.1" r="8.7" fill="#ff0000" fill-opacity="0.78" filter="url(#mb)"/>
<circle cx="198.9" cy="166.4" r="8.7" fill="#a56a6a" fill-opacity="0.78" filter="url(#mb)"/>
<circle cx="138.3" cy="176.8" r="8.7" fill="#ff7e00" fill-opacity="0.78" filter="url(#mb)"/>
<circle cx="157.8" cy="197.0" r="8.7" fill="#ff7e00" fill-opacity="0.78" filter="url(#mb)"/>
<circle cx="176.3" cy="202.8" r="8.7" fill="#ff0000" fill-opacity="0.78" filter="url(#mb)"/>
<circle cx="182.2" cy="217.4" r="8.7" fill="#ffff00" fill-opacity="0.78" filter="url(#mb)"/>
<circle cx="209.0" cy="184.9" r="8.7" fill="#ff0000" fill-opacity="0.78" filter="url(#mb)"/>
<circle cx="215.8" cy="180.5" r="8.7" fill="#ff0000" fill-opacity="0.78" filter="url(#mb)"/>
<circle cx="234.8" cy="204.8" r="8.7" fill="#ff7e00" fill-opacity="0.78" filter="url(#mb)"/>
<circle cx="256.2" cy="200.8" r="8.7" fill="#ff0000" fill-opacity="0.78" filter="url(#mb)"/>
<circle cx="266.9" cy="190.3" r="8.7" fill="#ffff00" fill-opacity="0.78" filter="url(#mb)"/>
<circle cx="291.6" cy="183.0" r="8.7" fill="#ffff00" fill-opacity="0.78" filter="url(#mb)"/>
<circle cx="269.8" cy="224.9" r="8.7" fill="#ffff00" fill-opacity="0.78" filter="url(#mb)"/>
<circle cx="318.6" cy="153.2" r="8.7" fill="#ffff00" fill-opacity="0.78" filter="url(#mb)"/>
<circle cx="301.9" cy="118.4" r="8.7" fill="#ff0000" fill-opacity="0.78" filter="url(#mb)"/>
<circle cx="325.1" cy="110.3" r="8.7" fill="#8a8a8a" fill-opacity="0.78" filter="url(#mb)"/>
<circle cx="270.4" cy="82.2" r="8.7" fill="#00e400" fill-opacity="0.78" filter="url(#mb)"/>
<circle cx="163.5" cy="105.6" r="8.7" fill="#00e400" fill-opacity="0.78" filter="url(#mb)"/>
<circle cx="171.4" cy="103.9" r="8.7" fill="#ffff00" fill-opacity="0.78" filter="url(#mb)"/>
<text class="ml" x="44.8" y="233.5">N/A</text>
<text class="ml" x="24.3" y="211.5">99</text>
<text class="ml" x="46.3" y="191.2">91</text>
<text class="ml" x="33.1" y="153.6">N/A</text>
<text class="ml" x="63.5" y="147.8">46</text>
<text class="ml" x="75.4" y="162.8">163</text>
<text class="ml" x="71.2" y="179.9">N/A</text>
<text class="ml" x="96.6" y="180.8">57</text>
<text class="ml" x="82.4" y="174.1">169</text>
<text class="ml" x="99.6" y="178.1">156</text>
<text class="ml" x="109.9" y="129.2">122</text>
<text class="ml" x="145.8" y="115.0">37</text>
<text class="ml" x="144.3" y="126.7">88</text>
<text class="ml" x="145.6" y="143.1">151</text>
<text class="ml" x="153.2" y="145.1">168</text>
<text class="ml" x="158.4" y="146.3">83</text>
<text class="ml" x="162.7" y="154.6">155</text>
<text class="ml" x="172.1" y="165.7">161</text>
<text class="ml" x="198.9" y="169.0">N/A</text>
<text class="ml" x="138.3" y="179.4">116</text>
<text class="ml" x="157.8" y="199.6">136</text>
<text class="ml" x="176.3" y="205.4">157</text>
<text class="ml" x="182.2" y="220.0">99</text>
<text class="ml" x="209.0" y="187.5">159</text>
<text class="ml" x="215.8" y="183.1">155</text>
<text class="ml" x="234.8" y="207.4">147</text>
<text class="ml" x="256.2" y="203.4">163</text>
<text class="ml" x="266.9" y="192.9">99</text>
<text class="ml" x="291.6" y="185.6">71</text>
<text class="ml" x="269.8" y="227.5">54</text>
<text class="ml" x="318.6" y="155.8">78</text>
<text class="ml" x="301.9" y="121.0">165</text>
<text class="ml" x="325.1" y="112.9">N/A</text>
<text class="ml" x="270.4" y="84.8">45</text>
<text class="ml" x="163.5" y="108.2">38</text>
<text class="ml" x="171.4" y="106.5">94</text>
<defs><filter id="soft" x="-5%" y="-5%" width="110%" height="110%"><feGaussianBlur stdDeviation="0.35"/></filter><filter id="mb" x="-20%" y="-20%" width="140%" height="140%"><feGaussianBlur stdDeviation="0.6"/></filter></defs>
</svg>
<div class="abs pop"><div class="tx">Bishkek<br>2021-03-18 7:00 PM<br>(LT)</div>
<div class="ptab"><div style="left:0;top:0;right:0;height:16.600px;background:#05477f"></div><div style="left:0;top:0;width:48.600px;height:16.400px;color:#fff;font-weight:bold;line-height:15.500px">Pollutant</div><div style="left:48.600px;top:0;right:0;height:16.400px;color:#fff;font-weight:bold;line-height:15.500px">AQI</div><div style="left:0;top:16.400px;width:48.600px;bottom:0;line-height:15.500px;color:#444;border-right:.8px solid #05477f">PM2.5</div><div style="left:48.600px;top:16.400px;right:0;bottom:0;background:#00e400;line-height:15.500px;color:#1a3a1a">38</div></div></div>
</div>
<div class="abs sel-h" style="top:4px">Select a City</div>
<div class="abs sel-d" style="top:25.800px">Bishkek<span class="x">×</span><span class="a"></span></div>
<div class="abs sel-h" style="top:59.300px;height:20.700px">Select a Parameter</div>
<div class="abs sel-d" style="top:80.800px">PM2.5<span class="x">×</span><span class="a"></span></div>
<div class="abs cbox"><b>Bishkek</b><svg class="rss" width="20" height="20.400" viewBox="0 0 20 20.400"><rect width="20" height="20.400" fill="#f2b63d"/><circle cx="5.200" cy="15.400" r="2.100" fill="#fff"/><path d="M3.200 8.300a9 9 0 0 1 9 9" fill="none" stroke="#fff" stroke-width="2.350"/><path d="M3.200 3.600a13.700 13.700 0 0 1 13.700 13.700" fill="none" stroke="#fff" stroke-width="2.350"/></svg></div>
<div class="abs note">Note: Values above 500 are considered Beyond the AQI. Follow<br>recommendations for the Hazardous category. Additional information<br>on reducing exposure to extremely high levels of particle pollution is<br>available <b>here</b>.</div>
<div class="abs tab on">AQI</div>
<div class="abs tab off" style="left:73.800px;width:96.600px">Concentration</div>
<div class="abs tab off" style="left:172.300px;width:79.600px">Historical</div>
<div class="abs tline"></div>
<div class="abs learn">Learn more about how the Air Quality Index [AQI] is calculated from the EPA <u>here</u>.</div>
<div class="abs cpanel"><svg class="chart" width="461" height="178" viewBox="10 322 461 178">
<line x1="53.8" x2="468.5" y1="358.4" y2="358.4" stroke="#e6e6e6" stroke-width="0.7"/>
<text class="yl" x="44.5" y="360.6">500</text>
<line x1="53.8" x2="468.5" y1="379.4" y2="379.4" stroke="#e6e6e6" stroke-width="0.7"/>
<text class="yl" x="44.5" y="381.6">400</text>
<line x1="53.8" x2="468.5" y1="400.4" y2="400.4" stroke="#e6e6e6" stroke-width="0.7"/>
<text class="yl" x="44.5" y="402.6">300</text>
<line x1="53.8" x2="468.5" y1="421.4" y2="421.4" stroke="#e6e6e6" stroke-width="0.7"/>
<text class="yl" x="44.5" y="423.6">200</text>
<line x1="53.8" x2="468.5" y1="442.4" y2="442.4" stroke="#e6e6e6" stroke-width="0.7"/>
<text class="yl" x="44.5" y="444.6">100</text>
<line x1="53.8" x2="468.5" y1="463.4" y2="463.4" stroke="#ccd6eb" stroke-width="0.7"/>
<text class="yl" x="44.5" y="465.6">0</text>
<line x1="53.8" x2="53.8" y1="463.4" y2="469.2" stroke="#ccd6eb" stroke-width="0.7"/>
<line x1="71.1" x2="71.1" y1="463.4" y2="469.2" stroke="#ccd6eb" stroke-width="0.7"/>
<line x1="88.4" x2="88.4" y1="463.4" y2="469.2" stroke="#ccd6eb" stroke-width="0.7"/>
<line x1="105.7" x2="105.7" y1="463.4" y2="469.2" stroke="#ccd6eb" stroke-width="0.7"/>
<line x1="123.0" x2="123.0" y1="463.4" y2="469.2" stroke="#ccd6eb" stroke-width="0.7"/>
<line x1="140.2" x2="140.2" y1="463.4" y2="469.2" stroke="#ccd6eb" stroke-width="0.7"/>
<line x1="157.5" x2="157.5" y1="463.4" y2="469.2" stroke="#ccd6eb" stroke-width="0.7"/>
<line x1="174.8" x2="174.8" y1="463.4" y2="469.2" stroke="#ccd6eb" stroke-width="0.7"/>
<line x1="192.1" x2="192.1" y1="463.4" y2="469.2" stroke="#ccd6eb" stroke-width="0.7"/>
<line x1="209.4" x2="209.4" y1="463.4" y2="469.2" stroke="#ccd6eb" stroke-width="0.7"/>
<line x1="226.7" x2="226.7" y1="463.4" y2="469.2" stroke="#ccd6eb" stroke-width="0.7"/>
<line x1="244.0" x2="244.0" y1="463.4" y2="469.2" stroke="#ccd6eb" stroke-width="0.7"/>
<line x1="261.3" x2="261.3" y1="463.4" y2="469.2" stroke="#ccd6eb" stroke-width="0.7"/>
<line x1="278.6" x2="278.6" y1="463.4" y2="469.2" stroke="#ccd6eb" stroke-width="0.7"/>
<line x1="295.9" x2="295.9" y1="463.4" y2="469.2" stroke="#ccd6eb" stroke-width="0.7"/>
<line x1="313.1" x2="313.1" y1="463.4" y2="469.2" stroke="#ccd6eb" stroke-width="0.7"/>
<line x1="330.4" x2="330.4" y1="463.4" y2="469.2" stroke="#ccd6eb" stroke-width="0.7"/>
<line x1="347.7" x2="347.7" y1="463.4" y2="469.2" stroke="#ccd6eb" stroke-width="0.7"/>
<line x1="365.0" x2="365.0" y1="463.4" y2="469.2" stroke="#ccd6eb" stroke-width="0.7"/>
<line x1="382.3" x2="382.3" y1="463.4" y2="469.2" stroke="#ccd6eb" stroke-width="0.7"/>
<line x1="399.6" x2="399.6" y1="463.4" y2="469.2" stroke="#ccd6eb" stroke-width="0.7"/>
<line x1="416.9" x2="416.9" y1="463.4" y2="469.2" stroke="#ccd6eb" stroke-width="0.7"/>
<line x1="434.2" x2="434.2" y1="463.4" y2="469.2" stroke="#ccd6eb" stroke-width="0.7"/>
<line x1="451.5" x2="451.5" y1="463.4" y2="469.2" stroke="#ccd6eb" stroke-width="0.7"/>
<line x1="468.8" x2="468.8" y1="463.4" y2="469.2" stroke="#ccd6eb" stroke-width="0.7"/>
<path d="M57.6 463.4V438.8H66.2V463.4" fill="#ff7e00" stroke="#3a3226" stroke-width="0.7"/>
<text class="xl" transform="translate(63.4 473.4) rotate(-45)">8 PM</text>
<path d="M74.9 463.4V436.9H83.5V463.4" fill="#ff7e00" stroke="#3a3226" stroke-width="0.7"/>
<text class="xl" transform="translate(80.7 473.4) rotate(-45)">9 PM</text>
<path d="M92.2 463.4V438.2H100.8V463.4" fill="#ff7e00" stroke="#3a3226" stroke-width="0.7"/>
<text class="xl" transform="translate(98.0 473.4) rotate(-45)">10 PM</text>
<path d="M109.5 463.4V438.2H118.1V463.4" fill="#ff7e00" stroke="#3a3226" stroke-width="0.7"/>
<text class="xl" transform="translate(115.3 473.4) rotate(-45)">11 PM</text>
<path d="M126.8 463.4V438.2H135.4V463.4" fill="#ff7e00" stroke="#3a3226" stroke-width="0.7"/>
<text class="xl" transform="translate(132.6 473.4) rotate(-45)">2021 12 AM</text>
<path d="M144.1 463.4V433.6H152.7V463.4" fill="#ff7e00" stroke="#3a3226" stroke-width="0.7"/>
<text class="xl" transform="translate(149.9 473.4) rotate(-45)">1 AM</text>
<path d="M161.4 463.4V436.3H170.0V463.4" fill="#ff7e00" stroke="#3a3226" stroke-width="0.7"/>
<text class="xl" transform="translate(167.2 473.4) rotate(-45)">2 AM</text>
<path d="M178.7 463.4V442.0H187.3V463.4" fill="#ff7e00" stroke="#3a3226" stroke-width="0.7"/>
<text class="xl" transform="translate(184.5 473.4) rotate(-45)">3 AM</text>
<path d="M196.0 463.4V442.2H204.6V463.4" fill="#ff7e00" stroke="#3a3226" stroke-width="0.7"/>
<text class="xl" transform="translate(201.8 473.4) rotate(-45)">4 AM</text>
<path d="M213.3 463.4V442.0H221.9V463.4" fill="#ff7e00" stroke="#3a3226" stroke-width="0.7"/>
<text class="xl" transform="translate(219.1 473.4) rotate(-45)">5 AM</text>
<path d="M230.5 463.4V439.9H239.1V463.4" fill="#ff7e00" stroke="#3a3226" stroke-width="0.7"/>
<text class="xl" transform="translate(236.3 473.4) rotate(-45)">6 AM</text>
<path d="M247.8 463.4V441.1H256.4V463.4" fill="#ff7e00" stroke="#3a3226" stroke-width="0.7"/>
<text class="xl" transform="translate(253.6 473.4) rotate(-45)">7 AM</text>
<path d="M265.1 463.4V441.8H273.7V463.4" fill="#ff7e00" stroke="#3a3226" stroke-width="0.7"/>
<text class="xl" transform="translate(270.9 473.4) rotate(-45)">8 AM</text>
<path d="M282.4 463.4V443.7H291.0V463.4" fill="#ffff00" stroke="#3a3226" stroke-width="0.7"/>
<text class="xl" transform="translate(288.2 473.4) rotate(-45)">9 AM</text>
<path d="M299.7 463.4V444.3H308.3V463.4" fill="#ffff00" stroke="#3a3226" stroke-width="0.7"/>
<text class="xl" transform="translate(305.5 473.4) rotate(-45)">10 AM</text>
<path d="M317.0 463.4V447.0H325.6V463.4" fill="#ffff00" stroke="#3a3226" stroke-width="0.7"/>
<text class="xl" transform="translate(322.8 473.4) rotate(-45)">11 AM</text>
<path d="M334.3 463.4V449.5H342.9V463.4" fill="#ffff00" stroke="#3a3226" stroke-width="0.7"/>
<text class="xl" transform="translate(340.1 473.4) rotate(-45)">12 PM</text>
<path d="M351.6 463.4V451.8H360.2V463.4" fill="#ffff00" stroke="#3a3226" stroke-width="0.7"/>
<text class="xl" transform="translate(357.4 473.4) rotate(-45)">1 PM</text>
<path d="M368.9 463.4V454.6H377.5V463.4" fill="#00e400" stroke="#3a3226" stroke-width="0.7"/>
<text class="xl" transform="translate(374.7 473.4) rotate(-45)">2 PM</text>
<path d="M386.2 463.4V457.1H394.8V463.4" fill="#00e400" stroke="#3a3226" stroke-width="0.7"/>
<text class="xl" transform="translate(392.0 473.4) rotate(-45)">3 PM</text>
<path d="M403.4 463.4V459.0H412.0V463.4" fill="#00e400" stroke="#3a3226" stroke-width="0.7"/>
<text class="xl" transform="translate(409.2 473.4) rotate(-45)">4 PM</text>
<path d="M420.7 463.4V460.7H429.3V463.4" fill="#00e400" stroke="#3a3226" stroke-width="0.7"/>
<text class="xl" transform="translate(426.5 473.4) rotate(-45)">5 PM</text>
<path d="M438.0 463.4V459.4H446.6V463.4" fill="#00e400" stroke="#3a3226" stroke-width="0.7"/>
<text class="xl" transform="translate(443.8 473.4) rotate(-45)">6 PM</text>
<path d="M455.3 463.4V455.4H463.9V463.4" fill="#00e400" stroke="#3a3226" stroke-width="0.7"/>
<text class="xl" transform="translate(461.1 473.4) rotate(-45)">7 PM</text>
<text class="ct" x="242.2" y="336.5">Bishkek - PM2.5</text>
<text class="ya" transform="translate(27 408) rotate(-90)">AQI</text>
</svg></div>
<div class="abs cc"><div class="h"><div style="position:absolute;left:0;right:0;top:3.600px;font-size:8.700px;line-height:10px">Current Conditions</div><div style="position:absolute;left:0;right:0;top:16.500px;font-size:7.010px;line-height:8px">observed at</div><div style="position:absolute;left:0;right:0;top:28.500px;font-size:8.700px;line-height:10px">Mar 18, 2021 7:00 PM (LT)</div></div>
<div class="g"><div style="position:absolute;left:0;right:0;top:8.900px;line-height:16.300px">38 AQI<br>Good<br>PM2.5</div></div>
<div class="m"><div style="position:absolute;left:0;right:0;top:6px;text-align:center;font-weight:bold;color:#222;font-size:7.010px;line-height:8px">Health Message</div><div style="position:absolute;left:2.500px;top:18.200px;line-height:12.400px;white-space:nowrap">The AQI value for your community is<br>between 0 and 50. Air quality is satisfactory<br>and poses little or no health risk.</div></div></div>
<div class="abs note2">Note: Values above 500 are considered Beyond the</div>
</body></html>
